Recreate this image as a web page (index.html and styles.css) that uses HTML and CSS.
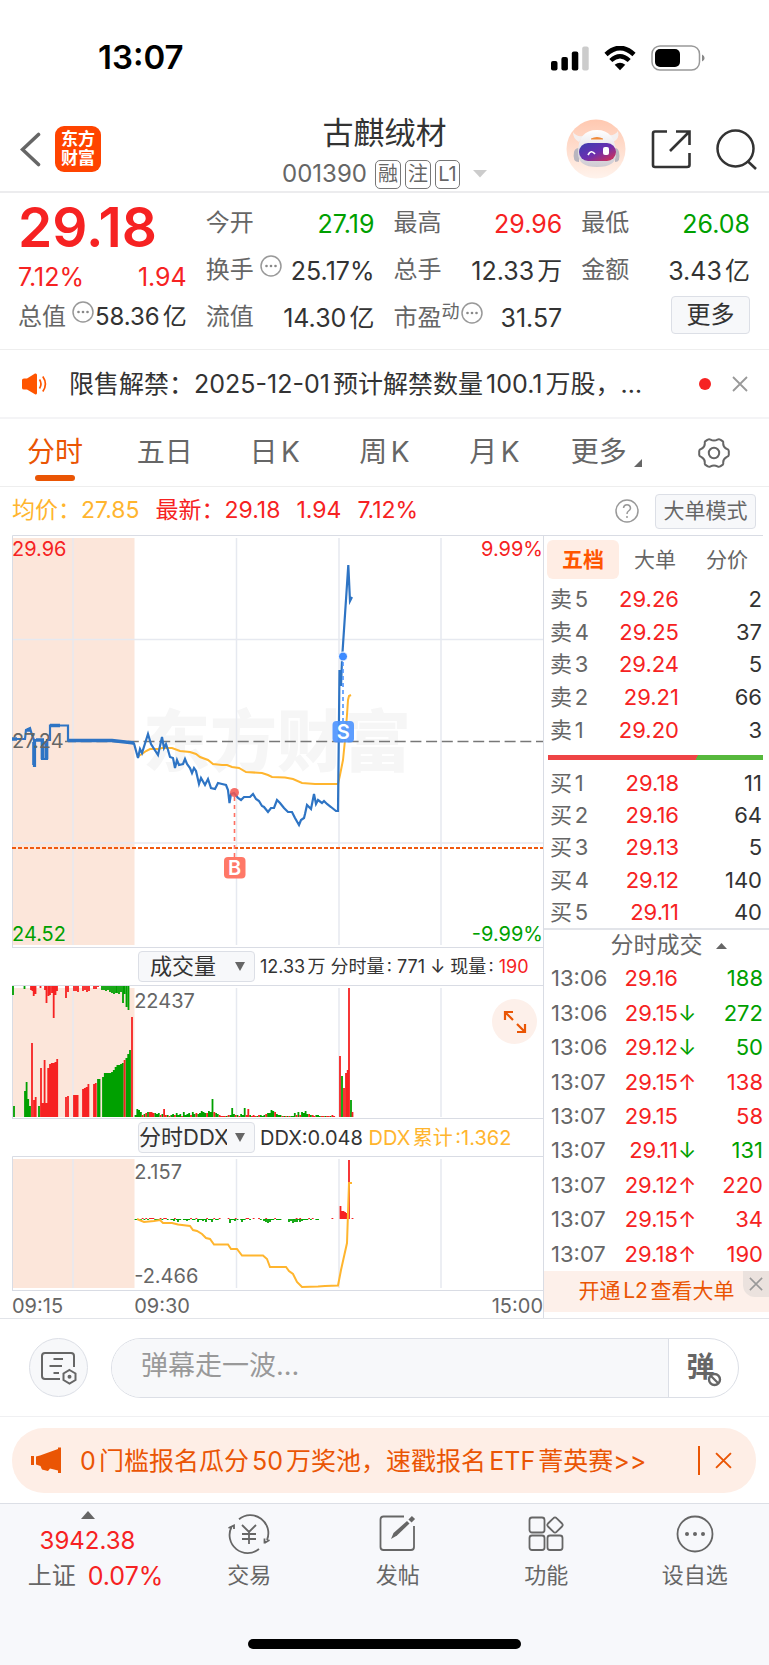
FILE: index.html
```html
<!DOCTYPE html>
<html lang="zh-CN">
<head>
<meta charset="utf-8">
<meta name="viewport" content="width=device-width, initial-scale=1">
<title>古麒绒材 001390</title>
<link rel="stylesheet" href="styles.css">
</head>
<body>
<svg class="defs" aria-hidden="true">
  <symbol id="more-dots" viewBox="0 0 22 22"><circle cx="11" cy="11" r="10" fill="none" stroke="#999" stroke-width="1.5"/><circle cx="6.5" cy="11" r="1.3" fill="#888"/><circle cx="11" cy="11" r="1.3" fill="#888"/><circle cx="15.500" cy="11" r="1.3" fill="#888"/></symbol>
  <symbol id="cross" viewBox="0 0 16 16"><path d="M1 1L15 15M15 1L1 15" fill="none" stroke="currentColor" stroke-width="1.8"/></symbol>
</svg>

<div class="status">
  <span class="clock">13:07</span>
  <span class="status-icons">
    <svg width="38" height="25" viewBox="0 0 38 25"><rect x="0" y="15" width="6.500" height="9.500" rx="2"/><rect x="10.400" y="11" width="6.500" height="13.500" rx="2"/><rect x="20.800" y="5.500" width="6.500" height="19" rx="2"/><rect x="31.200" y="0.500" width="6.500" height="24" rx="2" fill="#ccc"/></svg>
    <svg width="34" height="25" viewBox="0 0 34 25"><path d="M3 8.500Q17-4.500 31 8.500" fill="none" stroke="#000" stroke-width="4.600"/><path d="M7.800 14.500Q17 6 26.200 14.500" fill="none" stroke="#000" stroke-width="4.400"/><path d="M11.700 18.800Q17 14.500 22.300 18.800L17 24.300Z"/></svg>
    <svg width="54" height="26" viewBox="0 0 54 26"><rect x="1" y="1" width="47.500" height="24" rx="8" fill="none" stroke="#999" stroke-width="1.500"/><rect x="4" y="4" width="25" height="18" rx="5"/><path d="M51 9.500Q53.600 10.500 53.600 13T51 16.500Z" fill="#888"/></svg>
  </span>
</div>

<header class="header">
  <div class="header-left">
    <button class="icon-btn" aria-label="返回"><svg width="21" height="35" viewBox="0 0 21 35"><path d="M18.500 2.500L2.500 17.500L18.500 32.500" fill="none" stroke="#666" stroke-width="3.600" stroke-linecap="round"/></svg></button>
    <a class="logo" href="#">东方<br>财富</a>
  </div>
  <div class="stock">
    <h1>古麒绒材</h1>
    <div class="stock-code"><span>001390</span><i class="tag">融</i><i class="tag">注</i><i class="tag">L1</i><svg class="caret" width="14" height="8" viewBox="0 0 14 8"><path d="M0 0H14L7 7.500Z" fill="#ccc"/></svg></div>
  </div>
  <div class="header-right">
    <button class="icon-btn" aria-label="智能助手"><svg width="60" height="60" viewBox="0 0 60 60">
      <defs><linearGradient id="peach" x1="0" y1="0" x2="0" y2="1"><stop offset="0" stop-color="#ffc8b0"/><stop offset="1" stop-color="#fff3ec"/></linearGradient><linearGradient id="visor" x1="0" y1="0" x2="1" y2="1"><stop offset="0" stop-color="#3a3fb0"/><stop offset=".5" stop-color="#6a2fb0"/><stop offset="1" stop-color="#e0304a"/></linearGradient><linearGradient id="shell" x1="0" y1="0" x2="0" y2="1"><stop offset="0" stop-color="#fff"/><stop offset="1" stop-color="#cfcbd2"/></linearGradient></defs>
      <circle cx="30" cy="30" r="29.500" fill="url(#peach)"/>
      <path d="M13 23Q7 20 7 13Q10 18 17 17M47 23Q54 20 52 12Q49 17 42 16" fill="#f4efef"/>
      <path d="M8 33Q6 43 13 43V29Q9 29 8 33M53 33Q55 43 49 43V29Q52 29 53 33" fill="#b9b6bf"/>
      <path d="M12 34Q12 11 31 11Q49 11 50 34Q51 48 31 48Q12 48 12 34" fill="url(#shell)"/>
      <path d="M25 19.500Q31 16.500 37 19.500V20.500H25Z" fill="#ef8a3a"/>
      <rect x="13" y="24" width="37" height="18" rx="9" fill="url(#visor)"/>
      <path d="M22 36Q25 30 29 35" fill="none" stroke="#fff" stroke-width="1.700"/><rect x="37" y="28" width="6" height="8" rx="2" fill="#fff"/>
    </svg></button>
    <button class="icon-btn" aria-label="分享"><svg width="40" height="40" viewBox="0 0 40 40"><path d="M16 2.500H4Q2 2.500 2 4.500V36Q2 38 4 38H36Q38.500 38 38.500 36V24M25 2.500H38.500V16M38.500 2.500L19 22" fill="none" stroke="#333" stroke-width="2.600"/></svg></button>
    <button class="icon-btn" aria-label="搜索"><svg width="41" height="41" viewBox="0 0 41 41"><circle cx="19.500" cy="19.500" r="18" fill="none" stroke="#333" stroke-width="2.500"/><path d="M31.500 32L40 40" stroke="#333" stroke-width="2.600"/></svg></button>
  </div>
</header>

<section class="quote">
  <div class="quote-main">
    <strong class="price">29.18</strong>
    <div class="item red"><span>7.12%</span><span>1.94</span></div>
    <div class="item"><span class="label">总值</span><svg class="dots"><use href="#more-dots"/></svg><span class="value">58.36亿</span></div>
  </div>
  <div class="quote-col">
    <div class="item"><span class="label">今开</span><span class="value green">27.19</span></div>
    <div class="item"><span class="label">换手</span><svg class="dots"><use href="#more-dots"/></svg><span class="value">25.17%</span></div>
    <div class="item"><span class="label">流值</span><span class="value">14.30亿</span></div>
  </div>
  <div class="quote-col">
    <div class="item"><span class="label">最高</span><span class="value red">29.96</span></div>
    <div class="item"><span class="label">总手</span><span class="value">12.33万</span></div>
    <div class="item"><span class="label">市盈<sup>动</sup></span><svg class="dots near"><use href="#more-dots"/></svg><span class="value">31.57</span></div>
  </div>
  <div class="quote-col">
    <div class="item"><span class="label">最低</span><span class="value green">26.08</span></div>
    <div class="item"><span class="label">金额</span><span class="value">3.43亿</span></div>
    <div class="item"><button class="more-btn">更多</button></div>
  </div>
</section>

<section class="notice">
  <svg width="26" height="22" viewBox="0 0 26 22"><path d="M0 7Q0 5.500 2 5.500H5L13 0.500Q15 0 15 2V20Q15 22 13 21.200L5 16.500H2Q0 16.500 0 15Z" fill="#ff5500"/><path d="M17.500 6.500Q20.500 11 17.500 15.500M20.800 3.500Q26 11 20.800 18.500" fill="none" stroke="#ff5500" stroke-width="1.700"/></svg>
  <p>限售解禁：2025-12-01预计解禁数量100.1万股，…</p>
  <span class="unread"></span>
  <button class="icon-btn close-gray" aria-label="关闭公告"><svg width="16" height="16"><use href="#cross"/></svg></button>
</section>

<nav class="tabs">
  <button class="active">分时</button><button>五日</button><button>日K</button><button>周K</button><button>月K</button>
  <button class="has-corner">更多<svg width="8" height="8" viewBox="0 0 8 8"><path d="M8 0V8H0Z" fill="#666"/></svg></button>
  <button aria-label="设置"><svg width="32" height="32" viewBox="0 0 32 32" fill="none" stroke="#666" stroke-width="2"><path d="M12.500 2.600Q16 4.600 19.500 2.600Q21 1.800 22.300 2.700L24.800 4.300Q25.500 5 25.200 6.500Q25 9.800 28.500 11.800Q30.800 12.600 30.800 14V18Q30.800 19.200 28.500 20.200Q25 22.200 25.200 25.500Q25.500 27 24.800 27.700L22.300 29.300Q21 30.200 19.500 29.400Q16 27.400 12.500 29.400Q11 30.200 9.700 29.300L7.200 27.700Q6.500 27 6.800 25.500Q7 22.200 3.500 20.200Q1.200 19.200 1.200 18V14Q1.200 12.600 3.500 11.800Q7 9.800 6.800 6.500Q6.500 5 7.200 4.300L9.700 2.700Q11 1.800 12.500 2.600Z"/><circle cx="16" cy="16" r="5.200"/></svg></button>
</nav>

<section class="summary">
  <span class="amber">均价：27.85</span><span class="red">最新：29.18</span><span class="red">1.94</span><span class="red">7.12%</span>
  <button class="icon-btn help" aria-label="说明"><svg width="24" height="24" viewBox="0 0 24 24" fill="none" stroke="#999" stroke-width="1.500"><circle cx="12" cy="12" r="11"/><path d="M8.500 9Q8.800 5.800 12 5.800T15.500 9Q15.500 10.600 13.500 12Q12 13 12 15M12 17V19"/></svg></button>
  <button class="mode-btn">大单模式</button>
</section>

<main class="board">
  <div class="charts">
    <div class="plot">
      <svg class="canvas" viewBox="12 535 531 413">
        <rect x="12" y="538" width="122.500" height="407" fill="#fce6da"/>
        <text x="143" y="766" class="watermark">东方财富</text>
        <path class="grid" d="M73 538V945M236.500 538V945M339 538V945M441 538V945M12 639.500H543M12 843H543"/>
        <path class="frame" d="M12.500 948V535.500H543M12 947.500H543"/>
        <path d="M65 741.500H543" stroke="#777" stroke-width="1.300" stroke-dasharray="11 4.700"/>
        <path d="M12 848H543" stroke="#f05a10" stroke-width="2" stroke-dasharray="4 2"/>
        <path class="amber-line" d="M137 757L142 754L146 751L150 749H158L162 748H172L180 751L190 752L196 754L200 757L208 760L213 764L222 765H227L232 767L239 768L246 772L262 773L268 775L272 777L285 777.500L293 779L302 783L315 784H338L340 775L343 760L345 740L347 715L348 700L349 696L351 695"/>
        <path d="M234.500 797V857" stroke="#ff6f61" stroke-width="1.600" stroke-dasharray="4 4"/>
        <path class="blue-line" d="M12 739H25L26 730L30 728L32 735L34 740V766H35V740H42V759H47V740H50V725.500H68V740.500L113 741L126 742L134 743.500L138 758L140 749L142 753L148 734L151 744L158 755L162 737L164 748L166 744L168 750L170 757L173 758L175 768L177 760L179 765L183 764L185 759L187 764L190 768L192 773L194 768L196 771L199 784L201 778L205 785L208 779L211 788L215 789L218 783L222 784L226 785L228 790L229.500 803L231 794L234 793L238 798L241 800L244 797H250L253 794L256 799L259 801L262 806L264 807L268 812L271 808H274L277 800L280 803L284 808L288 812H292L295 818L299 825L301 820L304 818L305 814L307 805L311 809L314 794L316 804L318 800L322 803L324 801L327 804L331 807L336 811H338L339.500 670L341 686L342 660L348.300 565L350 601L352 597"/>
        <path d="M34 742V765M42.500 741V759M46.500 741V759M27 730H31M12 739H17M36 740H44M50 725.500H60M68 740.500H112L134 743" fill="none" stroke="#2e74c4" stroke-width="3.600"/>
        <circle cx="234.500" cy="792.500" r="4.500" fill="#f5564f" fill-opacity=".85"/>
        <rect x="224" y="857" width="21.500" height="21.500" rx="4" fill="#ff7867"/><text x="234.700" y="875" class="mark">B</text>
        <circle cx="343" cy="656.500" r="4.500" fill="#3d8bff" stroke="#fff"/>
        <path d="M343 662V721" stroke="#4d94ff" stroke-width="1.600" stroke-dasharray="4 3"/>
        <rect x="332.500" y="721" width="21.500" height="21.500" rx="4" fill="#4d94ff" fill-opacity=".9"/><text x="343.200" y="739" class="mark">S</text>
      </svg>
      <span class="tl red">29.96</span><span class="tr red">9.99%</span><span class="ml">27.24</span><span class="bl green">24.52</span><span class="br green">-9.99%</span>
    </div>
    <div class="plot-head">
      <label class="picker"><select aria-label="指标一"><option>成交量</option></select><svg width="10" height="9" viewBox="0 0 10 9"><path d="M0 0H10L5 9Z" fill="#666"/></svg></label>
      <span>12.33万 分时量: 771 ↓ 现量: <b class="red">190</b></span>
    </div>
    <div class="plot">
      <svg class="canvas" viewBox="12 985 531 134">
        <rect x="12" y="988" width="122.500" height="129" fill="#fce6da"/>
        <path class="grid" d="M73 988V1117M236.500 988V1117M339 988V1117M441 988V1117"/>
        <path class="frame" d="M12.500 1118V985.500H543M12 1118.500H543"/>
        <path id="vol-green" class="bar-green"/><path id="vol-red" class="bar-red"/>
      </svg>
      <span class="top-inner">22437</span>
      <button class="expand" aria-label="全屏"><svg width="24" height="24" viewBox="0 0 24 24" fill="none" stroke="#ea5504" stroke-width="2.200"><path d="M2 10V2H10M2 2L10 10M22 14V22H14M22 22L14 14"/></svg></button>
    </div>
    <div class="plot-head large">
      <label class="picker"><select aria-label="指标二"><option>分时DDX</option></select><svg width="10" height="9" viewBox="0 0 10 9"><path d="M0 0H10L5 9Z" fill="#666"/></svg></label>
      <span>DDX:0.048 <span class="amber">DDX累计:1.362</span></span>
    </div>
    <div class="plot">
      <svg class="canvas" viewBox="12 1156 531 135">
        <rect x="12" y="1159" width="122.500" height="129" fill="#fce6da"/>
        <path class="grid" d="M73 1159V1288M236.500 1159V1288M339 1159V1288M441 1159V1288"/>
        <path class="frame" d="M12.500 1291V1156.500H543M12 1290.500H543"/>
        <path id="ddx-green" class="bar-green"/><path id="ddx-red" class="bar-red"/>
        <path class="amber-line" d="M137 1219L144 1222L154 1221L160 1220L163 1223L172 1223L178 1224.500L190 1226L193 1230L197 1231L202 1234L206 1238L210 1239L214 1244.500H228L231 1249H237L242 1255.500H263L267 1259L270 1267H286L289 1271L293 1274L297 1282L302 1287L318 1286.500L325 1286L338 1285.500L341 1270L347 1243L349 1183H352"/>
      </svg>
      <span class="top-inner">2.157</span><span class="bottom-inner">-2.466</span>
    </div>
    <div class="axis"><span>09:15</span><span>09:30</span><span>15:00</span></div>
  </div>

  <aside class="depth">
    <div class="depth-tabs"><button class="active">五档</button><button>大单</button><button>分价</button></div>
    <table class="orders">
      <tr><th>卖5</th><td class="red">29.26</td><td>2</td></tr>
      <tr><th>卖4</th><td class="red">29.25</td><td>37</td></tr>
      <tr><th>卖3</th><td class="red">29.24</td><td>5</td></tr>
      <tr><th>卖2</th><td class="red">29.21</td><td>66</td></tr>
      <tr><th>卖1</th><td class="red">29.20</td><td>3</td></tr>
    </table>
    <div class="ratio"></div>
    <table class="orders">
      <tr><th>买1</th><td class="red">29.18</td><td>11</td></tr>
      <tr><th>买2</th><td class="red">29.16</td><td>64</td></tr>
      <tr><th>买3</th><td class="red">29.13</td><td>5</td></tr>
      <tr><th>买4</th><td class="red">29.12</td><td>140</td></tr>
      <tr><th>买5</th><td class="red">29.11</td><td>40</td></tr>
    </table>
    <button class="ticks-head">分时成交<svg width="11" height="6" viewBox="0 0 11 6"><path d="M0 6L5.500 0L11 6Z" fill="#666"/></svg></button>
    <table class="ticks">
      <tr><th>13:06</th><td class="red">29.16</td><td></td><td class="green">188</td></tr>
      <tr><th>13:06</th><td class="red">29.15</td><td class="green">↓</td><td class="green">272</td></tr>
      <tr><th>13:06</th><td class="red">29.12</td><td class="green">↓</td><td class="green">50</td></tr>
      <tr><th>13:07</th><td class="red">29.15</td><td class="red">↑</td><td class="red">138</td></tr>
      <tr><th>13:07</th><td class="red">29.15</td><td></td><td class="red">58</td></tr>
      <tr><th>13:07</th><td class="red">29.11</td><td class="green">↓</td><td class="green">131</td></tr>
      <tr><th>13:07</th><td class="red">29.12</td><td class="red">↑</td><td class="red">220</td></tr>
      <tr><th>13:07</th><td class="red">29.15</td><td class="red">↑</td><td class="red">34</td></tr>
      <tr><th>13:07</th><td class="red">29.18</td><td class="red">↑</td><td class="red">190</td></tr>
    </table>
    <div class="l2"><a href="#">开通L2查看大单</a><button aria-label="关闭L2提示"><svg width="14" height="14"><use href="#cross"/></svg></button></div>
  </aside>
</main>

<section class="danmu">
  <button class="round" aria-label="弹幕列表"><svg width="38" height="34" viewBox="0 0 38 34" fill="none" stroke="#666" stroke-width="2"><path d="M20 28H5Q2 28 2 25V5Q2 2 5 2H31Q34 2 34 5V16M13.500 8H23M9.500 15H22M13.500 22H19"/><path d="M29.500 19L35.500 22.500V29L29.500 32.500L23.500 29V22.500Z"/><circle cx="29.500" cy="25.800" r="1" fill="#666"/></svg></button>
  <div class="danmu-box">
    <input type="text" placeholder="弹幕走一波..." aria-label="弹幕">
    <button aria-label="关闭弹幕"><span>弹</span><svg width="15" height="15" viewBox="0 0 15 15"><circle cx="7.500" cy="7.500" r="5.500" fill="#fff" stroke="#666" stroke-width="2.400"/><path d="M4 4L11 11" stroke="#666" stroke-width="2.200"/></svg></button>
  </div>
</section>

<section class="promo-wrap">
  <div class="promo">
    <svg width="31" height="27" viewBox="0 0 31 27" fill="#ea5504"><path d="M0 9H3V18H0ZM5 9.500L9 8.500L27 2V0.500H30V26H27V23.500L19 21.500L17 24L11 22.500L9.500 19L5 17.500Z"/></svg>
    <a href="#">0门槛报名瓜分50万奖池，速戳报名ETF菁英赛&gt;&gt;</a>
    <button class="icon-btn" aria-label="关闭活动"><svg width="17" height="17"><use href="#cross"/></svg></button>
  </div>
</section>

<footer class="footer">
  <nav class="toolbar">
    <a class="index" href="#"><svg width="14" height="8" viewBox="0 0 14 8"><path d="M0 8L7 0L14 8Z" fill="#666"/></svg><span class="red">3942.38</span><span class="index-row"><span>上证</span><b class="red">0.07%</b></span></a>
    <a href="#"><svg width="42" height="40" viewBox="0 0 42 40" fill="none" stroke="#666" stroke-width="1.800"><path d="M11 5.200A18 18 0 0 1 39 26M31 35A18 18 0 0 1 3.500 13M0.500 14L6 11.500V15M36.500 29.500V24.500M36.500 29L41.500 26M14 11L21 18L28 11M21 18V30M14 20H28M14 25H28"/></svg>交易</a>
    <a href="#"><svg width="40" height="40" viewBox="0 0 40 40" fill="none" stroke="#666" stroke-width="1.800"><path d="M26 2.500H5.500Q2.500 2.500 2.500 5.500V33Q2.500 36 5.500 36H33Q36 36 36 33V12"/><path d="M13 25L15.500 19L29 7L31.500 9.500L19 21.500Z" fill="#666" stroke="none"/><path d="M32 7L35.500 3.500" stroke-width="4.500"/></svg>发帖</a>
    <a href="#"><svg width="38" height="40" viewBox="0 0 38 40" fill="none" stroke="#666" stroke-width="1.800"><rect x="2.500" y="3.500" width="15" height="15" rx="2.500"/><rect x="2.500" y="21.500" width="15" height="14.500" rx="2.500"/><rect x="20.500" y="21.500" width="15" height="14.500" rx="2.500"/><path d="M26.500 4.200Q28 2.600 29.500 4.200L35 9.500Q36.400 11 35 12.500L29.500 17.800Q28 19.400 26.500 17.800L21 12.500Q19.600 11 21 9.500Z"/></svg>功能</a>
    <a href="#"><svg width="40" height="40" viewBox="0 0 40 40"><circle cx="20" cy="20" r="17.500" fill="none" stroke="#666" stroke-width="1.800"/><circle cx="12" cy="20" r="2" fill="#666"/><circle cx="20" cy="20" r="2" fill="#666"/><circle cx="28" cy="20" r="2" fill="#666"/></svg>设自选</a>
  </nav>
  <div class="home-bar"></div>
</footer>
<script src="chart.js"></script>
</body>
</html>
```
FILE: chart.js
```js
// Each bar is [x, y]; it runs from the given base line to y.
function bars(id, groups) {
  let d = "";
  for (const [base, list] of groups) {
    for (const [x, y] of list) d += "M" + x + " " + base + "V" + y;
  }
  document.getElementById(id).setAttribute("d", d);
}

const greenTop = [[13, 995], [24.5, 989], [102, 990], [104, 990], [106, 991], [108, 990], [110, 992], [112, 993], [114, 994], [116, 993], [117, 993], [119, 994], [121, 992], [123, 1003], [124.5, 994], [126.5, 1007], [128.5, 1010]];
const redTop = [[31, 990], [32.5, 991], [33.7, 996], [35.5, 994], [40.5, 988], [45, 990], [46.5, 1003], [48.5, 996], [50, 995], [52, 993], [53.7, 1018], [55.5, 995], [57, 991], [66, 998], [68, 992], [74, 991], [76, 991], [78, 992], [83, 991], [85, 990], [87, 992], [89, 991], [94, 989], [96, 989], [98, 987]];
const greenLow = [[14, 1106], [25, 1091], [26.6, 1082], [28.2, 1099], [30, 1106], [39, 1106], [98, 1079], [99.5, 1079], [103, 1077], [104.8, 1073], [106.6, 1073], [108.4, 1073], [110.2, 1073], [112, 1072], [113.8, 1070], [115.6, 1067], [117.4, 1065], [119.2, 1065], [121, 1064], [122.8, 1063], [126.4, 1058], [128.2, 1054], [130, 1050]];
const redLow = [[32, 1043], [34, 1100], [35.7, 1097], [41, 1068], [42.8, 1103], [44.6, 1060], [46.4, 1103], [48.2, 1068], [50, 1064], [51.8, 1063], [53.6, 1063], [55.4, 1062], [57.2, 1059], [66, 1097], [68, 1096], [74, 1095], [75.8, 1095], [77.6, 1095], [83, 1089], [84.8, 1088], [86.6, 1087], [88.4, 1084], [94, 1084], [95.8, 1083], [124.6, 1060], [132, 1017], [340, 1056], [344, 1088], [346, 1073], [347.7, 1070], [349, 988], [352.5, 1112]];

// Minute volume, in pixels, from 09:30 on; a minus sign marks a falling minute.
const minutes = [-2, -8, -7, -5, 2, -3, 4, -5, 5, 5, 4, -4, -3, -4, 2, -3, 8, 2, -2, 1, -2, -3, 2, -4, -2, -3, 1, -5, -2, -3, -4, 2, -5, -3, 4, -3, -4, -6, -5, -4, 4, -6, -5, -18, 5, -4, -3, 2, 1, 1, 1, -1, 2, -2, -9, -3, 2, -2, 1, -3, -2, -9, 2, 8, -2, 1, 2, 1, -1, 2, -2, -1, -2, 3, -4, -4, -7, -6, 5, -3, -2, -2, 1, -1, 1, -1, 1, -1, -1, -4, 2, -5, 2, -5, -4, -6, -3, 3, -2, 2, 1, -2, -2, -1, 1, 1, -1, 1, 1, -1, 2, 1];
const step = (x) => 135.5 + x * 1.79;
const minuteBars = (sign, base, scale) =>
  minutes.map((v, i) => [Math.round(step(i) * 10) / 10, base - Math.abs(v) * scale, v])
    .filter((b) => b[2] * sign > 0);

bars("vol-green", [[986, greenTop], [1117, greenLow], [1117, [[342, 1076], [351, 1100]]], [1117, minuteBars(-1, 1117, 1)]]);
bars("vol-red", [[986, redTop], [1117, redLow], [1117, minuteBars(1, 1117, 1)]]);
bars("ddx-green", [[1219, [[174, 1221], [178, 1222], [187, 1221], [198, 1222], [203, 1221], [206, 1222], [212, 1222], [230, 1223], [235, 1221], [242, 1222], [264, 1221], [266, 1222], [268, 1223], [270, 1222], [289, 1222], [291, 1221], [293, 1223], [295, 1222], [297, 1222], [300, 1222], [302, 1221]]], [1219, minutes.map((v, i) => [step(i), v < -1 ? 1220 : 1219])]]);
bars("ddx-red", [[1219, [[340.5, 1206], [342, 1211], [343.5, 1211], [345, 1212], [346.5, 1213], [349, 1160], [352.5, 1218]]], [1219, minutes.map((v, i) => [step(i), v > 1 ? 1218 : 1219])]]);
```
FILE: styles.css
```css
* { box-sizing: border-box; }
body {
  margin: 0;
  background: #fff;
  color: #333;
  font-family: Inter, "Noto Sans CJK SC", sans-serif;
  font-size: 24px;
  line-height: 1.2;
  text-autospace: normal;
}
button, input, select { font: inherit; color: inherit; border: 0; background: none; padding: 0; margin: 0; }
a { color: inherit; text-decoration: none; }
svg { display: block; flex: none; }
b, i, th { font-weight: 400; font-style: normal; }
h1, p { margin: 0; font-weight: 400; }
.defs { position: absolute; width: 0; height: 0; }
.red { color: #f62222; }
.green { color: #00a000; }
.amber { color: #ffb52e; }
.icon-btn { display: block; flex: none; }

.status { height: 100px; padding: 16px 64px 0 98px; display: flex; align-items: center; justify-content: space-between; color: #000; }
.clock { font-size: 33px; font-weight: 600; }
.status-icons { display: flex; gap: 14px; align-items: center; }

.header { height: 93px; padding: 4px 12px 0; border-bottom: 2px solid #ececee; display: grid; grid-template-columns: minmax(0, 1fr) auto minmax(0, 1fr); align-items: center; }
.header-left, .header-right { display: flex; align-items: center; }
.header-left { gap: 14px; padding-left: 8px; }
.header-right { gap: 25px; justify-content: flex-end; }
.logo { width: 46px; height: 46px; border-radius: 9px; background: #ff4400; color: #fff; font-size: 17px; line-height: 19px; font-weight: 700; text-align: center; padding-top: 4px; }
.stock { text-align: center; color: #333; padding-top: 8px; }
.stock h1 { font-size: 31px; line-height: 42px; }
.stock-code { display: flex; align-items: center; justify-content: center; gap: 4px; height: 40px; color: #666; }
.stock-code span { margin-right: 4px; }
.tag { border: 1px solid #777; border-radius: 5px; height: 29px; min-width: 25px; padding: 0 2px; line-height: 27px; font-size: 20px; }
.caret { margin-left: 9px; }

.quote { display: grid; grid-template-columns: repeat(4, minmax(0, 1fr)); gap: 19px; padding: 7px 19px 8px 18px; border-bottom: 1px solid #eee; }
.quote-main, .quote-col { display: flex; flex-direction: column; }
.item { display: flex; align-items: center; height: 47px; white-space: nowrap; }
.item .value, .item .more-btn { margin-left: auto; }
.quote-col .value, .quote-main .red { font-size: 25px; }
.quote-main .price { height: 54px; line-height: 54px; font-size: 55px; font-weight: 600; color: #f62222; }
.quote-main .item { height: 46px; justify-content: space-between; }
.quote-main .item:last-child { height: 34px; }
.label { color: #666; position: relative; }
.label sup { font-size: 18px; line-height: 1; vertical-align: 8px; }
.dots { width: 22px; height: 22px; margin: 0 0 10px 6px; }
.dots.near { margin-left: 1px; }
.more-btn { width: 79px; height: 38px; margin-bottom: 5px; border: 1px solid #dcdfe6; border-radius: 4px; background: #f7f8fa; }

.notice { height: 69px; border-bottom: 2px solid #f4f4f6; padding: 0 21px 0 22px; display: flex; align-items: center; }
.notice p { flex: 1; min-width: 0; margin-left: 21px; font-size: 25px; white-space: nowrap; overflow: hidden; }
.unread { width: 12px; height: 12px; border-radius: 50%; background: #f62222; margin-right: 21px; }
.close-gray { color: #999; }

.tabs { height: 68px; border-bottom: 1px solid #eee; display: grid; grid-template-columns: repeat(7, 1fr); color: #666; font-size: 28px; }
.tabs button { display: flex; align-items: center; justify-content: center; position: relative; }
.tabs .active { color: #ea5504; }
.tabs .active::after { content: ""; position: absolute; left: calc(50% - 20px); bottom: 5px; width: 40px; height: 6px; border-radius: 3px; background: #ea5504; }
.has-corner { gap: 7px; padding-left: 4px; }
.has-corner svg { margin-top: 20px; }

.summary { height: 48px; padding: 0 13px 0 12px; display: flex; align-items: center; gap: 16px; font-size: 23px; white-space: nowrap; }
.help { margin-left: auto; }
.mode-btn { height: 35px; width: 101px; border: 1px solid #dcdfe6; border-radius: 4px; background: #f7f8fa; color: #666; font-size: 21px; }

.board { display: grid; grid-template-columns: minmax(0, 1fr) 226px; border-bottom: 1px solid #e2e4e9; }
.charts { padding-left: 12px; }
.plot { position: relative; font-size: 20px; line-height: 24px; color: #666; }
.plot > span { position: absolute; }
.canvas { width: 100%; height: auto; fill: none; }
.grid { stroke: #e6e9f0; stroke-width: 1.5; }
.frame { stroke: #d9dce4; }
.blue-line { stroke: #2e74c4; stroke-width: 2.2; }
.amber-line { stroke: #ffb52e; stroke-width: 2; }
.bar-green { stroke: #00a000; stroke-width: 1.8; }
.bar-red { stroke: #f62222; stroke-width: 1.8; }
.watermark { font: 900 67px "Noto Sans CJK SC", sans-serif; fill: #f6f6f6; }
.mark { font: 600 20px Inter, sans-serif; fill: #fff; text-anchor: middle; }
.tl { left: 0; top: 2px; }
.tr { right: 0; top: 2px; }
.ml { left: 0; top: 194px; }
.bl { left: 0; bottom: 2px; }
.br { right: 0; bottom: 2px; }
.top-inner { left: 23%; top: 4px; }
.bottom-inner { left: 23%; bottom: 3px; }
.expand { position: absolute; right: 6px; top: 14px; width: 45px; height: 45px; border-radius: 50%; background: #fdf0ea; display: flex; align-items: center; justify-content: center; }
.plot-head { height: 37px; padding-left: 126px; display: flex; align-items: center; gap: 5px; font-size: 18px; white-space: nowrap; }
.plot-head.large { font-size: 20px; }
.picker { position: relative; flex: none; width: 117px; height: 31px; font-size: 22px; }
.picker select { appearance: none; width: 100%; height: 100%; padding-right: 27px; border: 1px solid #dcdfe6; border-radius: 4px; background: #f7f8fa; text-align-last: center; }
.picker svg { position: absolute; right: 10px; top: 11px; pointer-events: none; }
.axis { height: 27px; padding-top: 4px; display: grid; grid-template-columns: 23% 1fr auto; align-items: center; font-size: 20px; line-height: 23px; color: #666; }

.depth { border-left: 1px solid #d9dce4; display: flex; flex-direction: column; font-size: 22px; }
.depth-tabs { height: 48px; margin-right: 6px; border-top: 1px solid #d9dce4; padding: 4px 0 4px 3px; display: grid; grid-template-columns: repeat(3, 1fr); color: #666; font-size: 21px; }
.depth-tabs .active { background: #ffede4; color: #ff5500; font-weight: 600; border-radius: 6px; }
table { border-collapse: collapse; table-layout: fixed; }
td, th { padding: 0; text-align: right; line-height: 24px; }
th { text-align: left; color: #666; }
.orders { height: 163px; margin: 0 7px 0 6px; }
.orders th { width: 51px; }
.orders td:nth-child(2) { width: 78px; }
.ratio { height: 5px; margin: 9px 6px 7px 4px; background: linear-gradient(120deg, #ee4445 69%, #56b83c 69%); }
.ratio + .orders { height: 161px; }
.ticks-head { height: 33px; border-top: 2px solid #e2e4e9; color: #666; font-size: 23px; display: flex; align-items: center; justify-content: center; gap: 13px; padding-left: 24px; }
.ticks { height: 310px; margin: 0 6px 0 7px; }
.ticks th { width: 60px; }
.ticks td:nth-child(2) { width: 67px; }
.ticks td:nth-child(3) { width: 16px; text-align: center; }
.l2 { position: relative; height: 41px; background: #fdf0ea; color: #ea5504; font-size: 21px; padding-bottom: 2px; display: flex; align-items: center; justify-content: center; }
.l2 button { position: absolute; right: 0; top: 0; width: 26px; height: 26px; background: #ebe2de; color: #999; border-bottom-left-radius: 12px; display: flex; align-items: center; justify-content: center; }

.danmu { padding: 19px 30px 18px 29px; border-bottom: 1px solid #f0f0f2; display: flex; gap: 23px; }
.round { width: 59px; height: 59px; border: 1px solid #dcdfe6; border-radius: 50%; background: #f7f8fa; display: flex; align-items: center; justify-content: center; flex: none; }
.danmu-box { flex: 1; height: 60px; border: 1px solid #dcdfe6; border-radius: 30px; overflow: hidden; display: flex; }
.danmu-box input { flex: 1; min-width: 0; background: #f7f8fa; padding: 0 0 4px 29px; font-size: 27px; text-autospace: no-autospace; }
.danmu-box input::placeholder { color: #999; opacity: 1; }
.danmu-box button { width: 70px; border-left: 1px solid #dcdfe6; display: flex; align-items: center; justify-content: center; color: #666; font-size: 28px; font-weight: 700; position: relative; padding-right: 6px; }
.danmu-box button svg { position: absolute; left: 38px; top: 33px; }

.promo-wrap { padding: 11px 13px 10px 12px; }
.promo { height: 65px; border-radius: 32px; background: #feeee6; color: #ea5504; display: flex; align-items: center; padding: 0 24px 0 19px; font-size: 25px; white-space: nowrap; }
.promo a { flex: 1; min-width: 0; margin-left: 18px; overflow: hidden; }
.promo .icon-btn { border-left: 2px solid #ea5504; padding: 6px 0 6px 15px; }

.footer { border-top: 1px solid #dcdfe6; background: #f7f8fb; padding-bottom: 16px; }
.toolbar { display: grid; grid-template-columns: 175px repeat(4, minmax(0, 1fr)); height: 135px; color: #666; }
.toolbar a { display: flex; flex-direction: column; align-items: center; padding-top: 10px; gap: 8px; font-size: 22px; line-height: 26px; }
.toolbar .index { padding-top: 7px; gap: 9px; font-size: 24px; white-space: nowrap; }
.index-row { display: flex; gap: 12px; padding-left: 16px; }
.index-row b { font-size: 25px; }
.home-bar { width: 273px; height: 10px; border-radius: 5px; background: #000; margin: 0 auto; }
```
